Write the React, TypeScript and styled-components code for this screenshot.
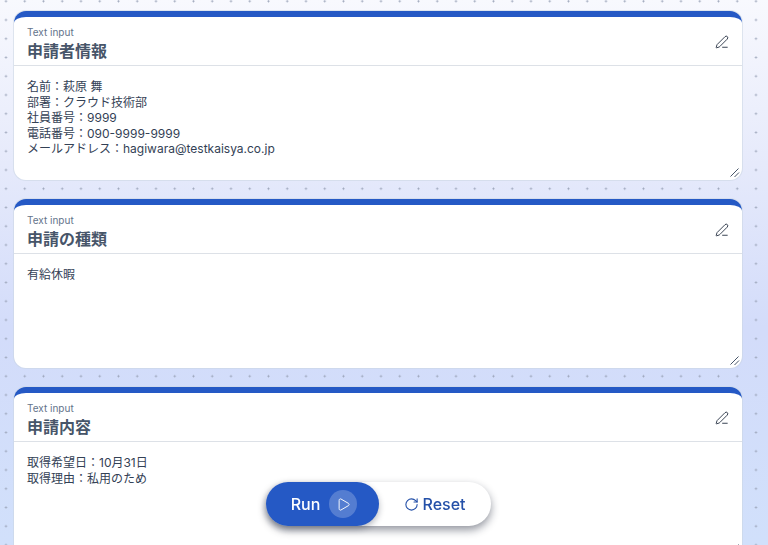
import React from "react";
import styled, { createGlobalStyle } from "styled-components";
import { PenLine, Play, RotateCw } from "lucide-react";

const GlobalStyle = createGlobalStyle`
  html, body {
    margin: 0;
    height: 100%;
    overflow: hidden;
    font-family: Inter, "Noto Sans CJK JP", sans-serif;
  }
  #root { height: 100%; }
`;

const Page = styled.div`
  height: 545px;
  overflow: hidden;
  box-sizing: border-box;
  padding: 11px 26px 0 14px;
  display: flex;
  flex-direction: column;
  gap: 19px;
  background-color: #dbe3fb;
  background-image:
    radial-gradient(circle at center, #9aa3b8 0.9px, transparent 1.1px),
    linear-gradient(180deg, #f8f9fe 0%, #e6eafb 30%, #d3dcfa 60%, #d1e0fb 100%);
  background-size: 18.75px 18.75px, 100% 100%;
  background-position: -3.4px 10.6px, 0 0;
`;

const Card = styled.section<{ $height: number }>`
  flex: 0 0 ${p => p.$height}px;
  position: relative;
  box-sizing: border-box;
  background: #fff;
  border-radius: 12px;
  border-top: 6px solid #2559c5;
  box-shadow: 0 0 0 1px rgba(203, 213, 225, 0.55);
`;

const Header = styled.header`
  height: 49px;
  padding: 9px 13px 0;
  box-sizing: border-box;
  display: flex;
  justify-content: space-between;
  border-bottom: 1px solid #dde1e7;
`;

const Titles = styled.div`
  display: flex;
  flex-direction: column;
  gap: 1px;
`;

const Kind = styled.span`
  font-size: 10px;
  line-height: 12px;
  color: #64748b;
`;

const Title = styled.h2`
  margin: 0;
  font-size: 16px;
  line-height: 24px;
  font-weight: 700;
  color: #475569;
`;

const EditButton = styled.button`
  border: 0;
  background: none;
  padding: 0;
  margin: 9px 0 0;
  width: 14px;
  height: 14px;
  color: #1e293b;
  display: flex;
`;

const Body = styled.div`
  padding: 13px 13px 0;
  font-size: 12px;
  line-height: 15.6px;
  color: #334155;
  white-space: pre-line;
`;

const Resizer = styled.svg`
  position: absolute;
  right: 1px;
  bottom: 1px;
  width: 12px;
  height: 12px;
  stroke: #475569;
  stroke-width: 1;
  fill: none;
`;

const ActionBar = styled.div`
  position: fixed;
  left: 266px;
  top: 482px;
  width: 225px;
  height: 44px;
  display: flex;
  border-radius: 22px;
  background: #fff;
  box-shadow: 0 4px 8px rgba(15, 23, 42, 0.45);
`;

const RunButton = styled.button`
  width: 113px;
  border: 0;
  border-radius: 22px;
  background: #2559c5;
  color: #fff;
  font: 500 16px Inter, sans-serif;
  display: flex;
  align-items: center;
  justify-content: center;
  gap: 9px;
  padding: 0 0 0 3px;
  box-shadow: 0 3px 6px rgba(15, 23, 42, 0.3);
`;

const PlayCircle = styled.span`
  width: 28px;
  height: 28px;
  border-radius: 50%;
  background: rgba(255, 255, 255, 0.22);
  display: flex;
  align-items: center;
  justify-content: center;
`;

const ResetButton = styled.button`
  flex: 1;
  border: 0;
  background: none;
  color: #2450a8;
  font: 500 16px Inter, sans-serif;
  display: flex;
  align-items: center;
  justify-content: center;
  gap: 3px;
  padding: 0;
`;

const cards = [
  {
    title: "申請者情報",
    height: 169,
    text: "名前：萩原 舞\n部署：クラウド技術部\n社員番号：9999\n電話番号：090-9999-9999\nメールアドレス：hagiwara@testkaisya.co.jp",
  },
  { title: "申請の種類", height: 169, text: "有給休暇" },
  { title: "申請内容", height: 169, text: "取得希望日：10月31日\n取得理由：私用のため" },
];

export default function App() {
  return (
    <>
      <GlobalStyle />
      <Page>
        {cards.map(card => (
          <Card key={card.title} $height={card.height}>
            <Header>
              <Titles>
                <Kind>Text input</Kind>
                <Title>{card.title}</Title>
              </Titles>
              <EditButton>
                <PenLine size={14} strokeWidth={1.5} />
              </EditButton>
            </Header>
            <Body>{card.text}</Body>
            <Resizer viewBox="0 0 12 12">
              <path d="M1.5 9.5 L9.5 1.5 M5.5 10 L10 5.5" />
            </Resizer>
          </Card>
        ))}
      </Page>
      <ActionBar>
        <RunButton>
          Run
          <PlayCircle>
            <Play size={15} strokeWidth={1.5} />
          </PlayCircle>
        </RunButton>
        <ResetButton>
          <RotateCw size={15} strokeWidth={1.75} />
          Reset
        </ResetButton>
      </ActionBar>
    </>
  );
}
